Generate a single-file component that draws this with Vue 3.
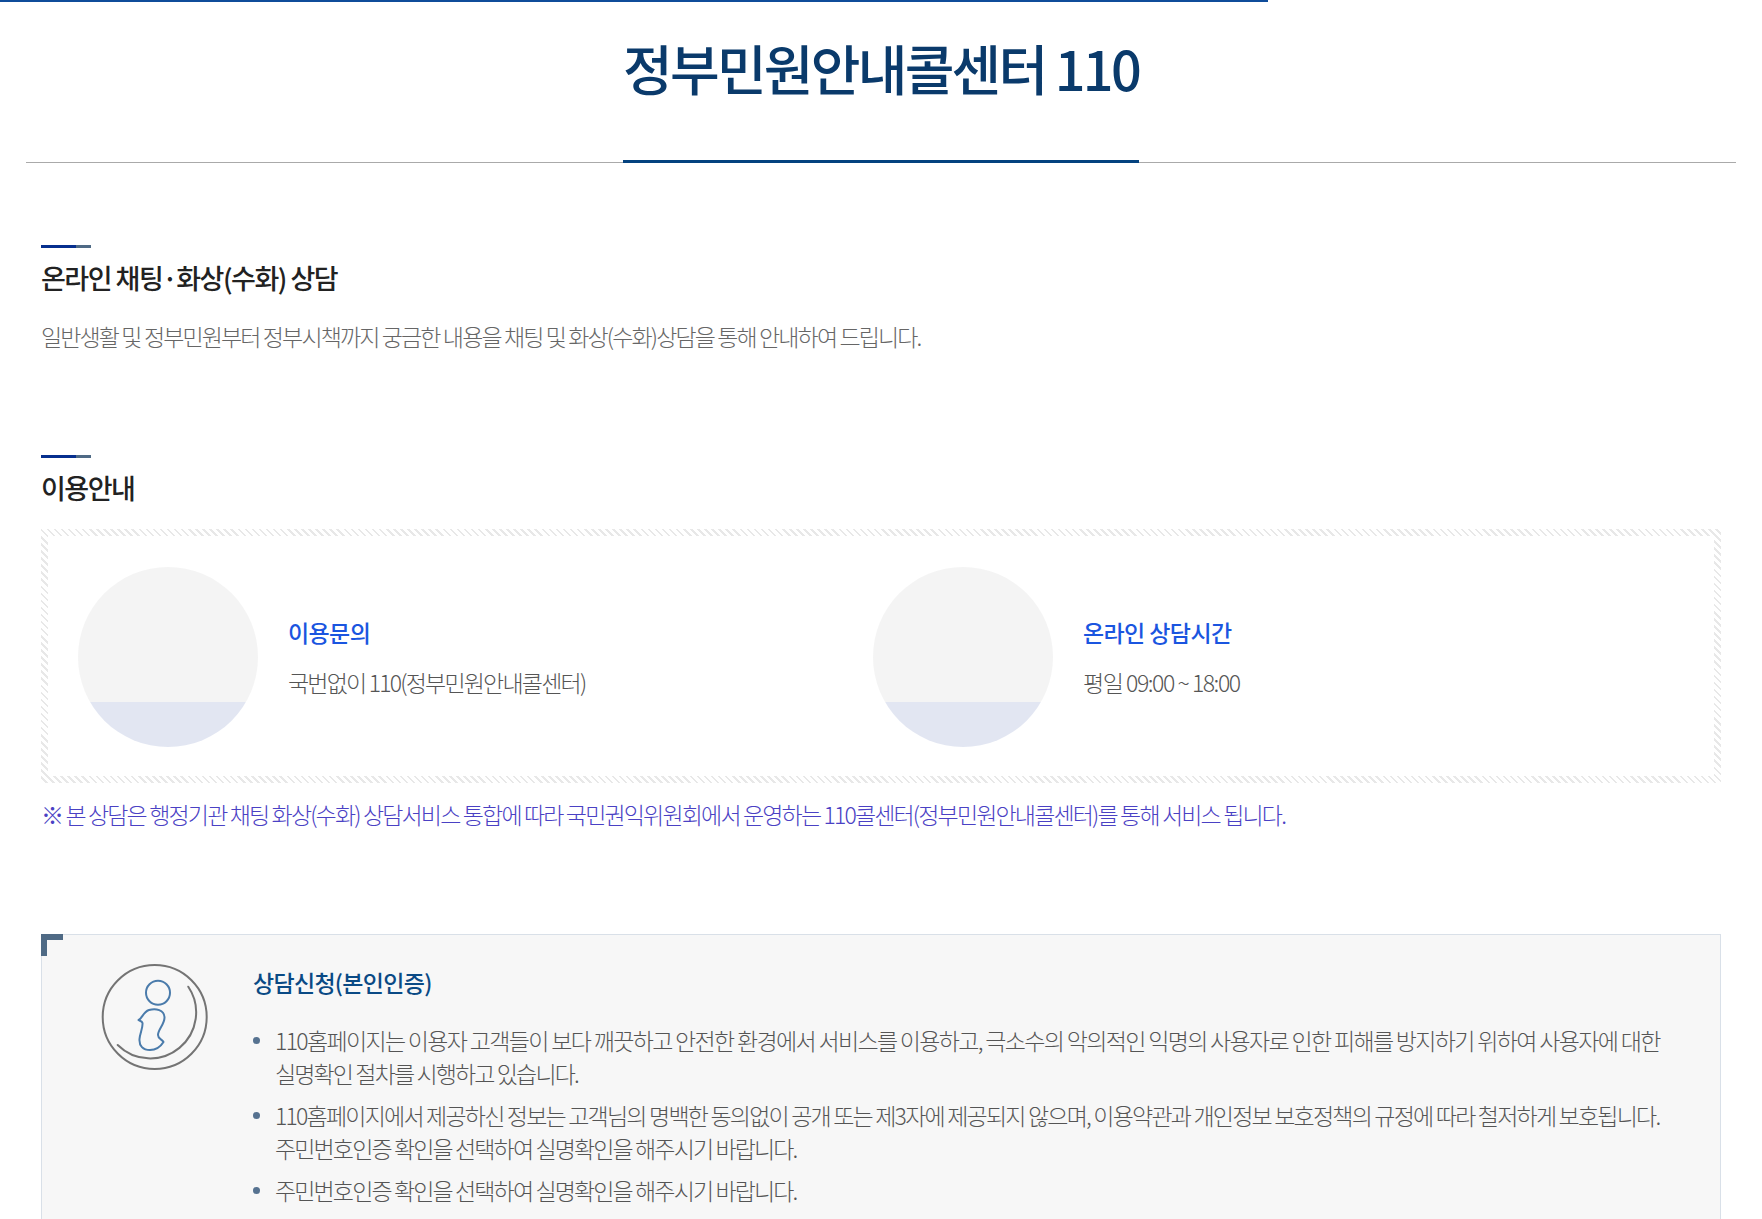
<script setup>
const cards = [
  { title: '이용문의', text: '국번없이 110(정부민원안내콜센터)', kind: '' },
  { title: '온라인 상담시간', text: '평일 09:00 ~ 18:00', kind: 'time' }
]
const notes = [
  [
    { t: '110홈페이지는 이용자 고객들이 보다 깨끗하고 안전한 환경에서 서비스를 이용하고, 극소수의 악의적인 익명의 사용자로 인한 피해를 방지하기 위하여 사용자에 대한', k: 'wide' },
    { t: '실명확인 절차를 시행하고 있습니다.', k: '' }
  ],
  [
    { t: '110홈페이지에서 제공하신 정보는 고객님의 명백한 동의없이 공개 또는 제3자에 제공되지 않으며, 이용약관과 개인정보 보호정책의 규정에 따라 철저하게 보호됩니다.', k: 'mid' },
    { t: '주민번호인증 확인을 선택하여 실명확인을 해주시기 바랍니다.', k: '' }
  ],
  [
    { t: '주민번호인증 확인을 선택하여 실명확인을 해주시기 바랍니다.', k: '' }
  ]
]
</script>

<template>
  <div class="page">
    <div class="topbar"></div>
    <header class="head">
      <h1>정부민원안내콜센터 110</h1>
    </header>
    <main class="content">
      <section class="sec first">
        <h2>온라인 채팅<span class="dot">·</span>화상(수화) 상담</h2>
        <p class="lead">일반생활 및 정부민원부터 정부시책까지 궁금한 내용을 채팅 및 화상(수화)상담을 통해 안내하여 드립니다.</p>
      </section>
      <section class="sec second">
        <h2>이용안내</h2>
        <div class="hatch">
          <div class="cards">
            <div v-for="c in cards" :key="c.title" class="card">
              <div class="disc"></div>
              <div class="info">
                <h3>{{ c.title }}</h3>
                <p :class="c.kind">{{ c.text }}</p>
              </div>
            </div>
          </div>
        </div>
        <p class="notice">※ 본 상담은 행정기관 채팅 화상(수화) 상담서비스 통합에 따라 국민권익위원회에서 운영하는 110콜센터(정부민원안내콜센터)를 통해 서비스 됩니다.</p>
      </section>
      <section class="panel">
        <span class="corner"></span>
        <svg class="icon" width="110" height="110" viewBox="0 0 110 110" fill="none">
          <circle cx="54.7" cy="55" r="52" stroke="#747474" stroke-width="2" />
          <path d="M88.3 24.7 A46 46 0 0 1 17.7 83" stroke="#747474" stroke-width="2" stroke-linecap="round" />
          <circle cx="58" cy="30.7" r="12" stroke="#4a7bab" stroke-width="2" />
          <path d="M38.5 58 C42 57 43 50 49 48 C56 46 64 48 64.5 55 C65 62 58 67 58 73 C58 77 62 77 63.5 80 C61 84 57 88 50 88 C43 88 39 84 39.5 77 C40 71 43 66 42.5 61 C42 59 40 59 38.5 58 Z" stroke="#4a7bab" stroke-width="2" stroke-linejoin="round" />
        </svg>
        <div class="panel-body">
          <h4>상담신청(본인인증)</h4>
          <ul>
            <li v-for="(n, i) in notes" :key="i">
              <span v-for="l in n" :key="l.t" class="line" :class="l.k">{{ l.t }}</span>
            </li>
          </ul>
        </div>
      </section>
    </main>
  </div>
</template>

<style>
html, body { margin: 0; background: #fff; }
</style>

<style scoped>
.page {
  width: 1762px;
  height: 1219px;
  overflow: hidden;
  font-family: "Noto Sans CJK KR", "Noto Sans", sans-serif;
  color: #666;
}
.topbar { width: 1268px; height: 2px; background: #0f4c9a; }
.head {
  margin: 0 26px;
  height: 160px;
  border-bottom: 1px solid #aaa;
  display: flex;
  justify-content: center;
}
h1 {
  margin: 0;
  width: 516px;
  height: 161px;
  box-sizing: border-box;
  padding-top: 27px;
  border-bottom: 3px solid #04427f;
  font-size: 54px;
  line-height: 78px;
  font-weight: 500;
  letter-spacing: -2.75px;
  color: #0a3a6b;
  text-align: center;
  white-space: nowrap;
}
.content { padding: 0 41px; }
.sec h2 {
  margin: 0;
  padding-top: 14px;
  background: linear-gradient(90deg, #062f8e 35px, #4f6a85 35px) no-repeat 0 0 / 50px 3px;
  font-size: 27px;
  line-height: 38px;
  font-weight: 500;
  letter-spacing: -1.5px;
  color: #222;
}
.dot { margin: 0; }
.first { padding-top: 82px; }
.lead {
  margin: 21px 0 0;
  font-size: 23px;
  line-height: 36px;
  font-weight: 300;
  letter-spacing: -1.87px;
  white-space: nowrap;
}
.second { padding-top: 101px; }
.hatch {
  margin-top: 22px;
  width: 1680px;
  height: 254px;
  box-sizing: border-box;
  padding: 7px;
  background: repeating-linear-gradient(45deg, #fff 0 3.2px, #e8e8e8 3.2px 5px);
}
.cards {
  height: 100%;
  box-sizing: border-box;
  background: #fff;
  display: grid;
  grid-template-columns: 795px 1fr;
  align-items: center;
  padding: 2px 0 0 30px;
}
.card { display: flex; align-items: center; gap: 30px; }
.disc {
  width: 180px;
  height: 180px;
  border-radius: 50%;
  background: linear-gradient(#f4f4f4 135px, #e2e6f2 135px);
  flex: none;
}
h3 {
  margin: 0;
  font-size: 23px;
  line-height: 34px;
  font-weight: 500;
  letter-spacing: -0.6px;
  color: #1a55e0;
}
.info p {
  margin: 16px 0 0;
  font-size: 23px;
  line-height: 34px;
  font-weight: 300;
  letter-spacing: -1.8px;
  color: #555;
}
.info p.time { letter-spacing: -1.45px; }
.notice {
  margin: 13px 0 0;
  font-size: 23px;
  line-height: 36px;
  font-weight: 300;
  letter-spacing: -1.84px;
  color: #4a41c4;
  white-space: nowrap;
}
.panel {
  position: relative;
  margin-top: 102px;
  width: 1680px;
  box-sizing: border-box;
  min-height: 400px;
  background: #f7f7f7;
  border: 1px solid #d9e0e8;
  display: flex;
  padding: 27px 0 0 58px;
}
.corner {
  position: absolute;
  left: -1px;
  top: -1px;
  width: 22px;
  height: 22px;
  box-sizing: border-box;
  border-left: 6px solid #4f6a85;
  border-top: 6px solid #4f6a85;
}
.icon { flex: none; }
.panel-body { margin-left: 43px; padding-top: 3px; }
h4 {
  margin: 0;
  font-size: 23px;
  line-height: 34px;
  font-weight: 500;
  letter-spacing: -0.7px;
  color: #0a4a85;
}
ul { margin: 25px 0 0; padding: 0; list-style: none; }
li {
  position: relative;
  padding-left: 22px;
  margin-bottom: 9px;
  font-size: 23px;
  line-height: 33px;
  font-weight: 300;
  letter-spacing: -1.87px;
  color: #555;
}
li::before {
  content: "";
  position: absolute;
  left: 0;
  top: 13px;
  width: 7px;
  height: 7px;
  border-radius: 50%;
  background: #567290;
}
.line { display: block; white-space: nowrap; }
.line.wide { letter-spacing: -1.66px; }
.line.mid { letter-spacing: -1.79px; }
</style>
